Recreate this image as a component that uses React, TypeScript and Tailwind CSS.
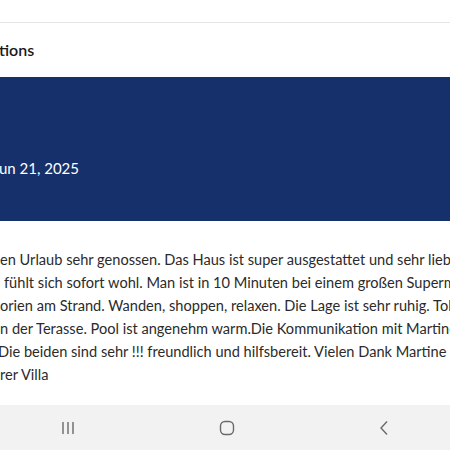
import React from "react";

const lines = [
  { text: "en Urlaub sehr genossen. Das Haus ist super ausgestattet und sehr lieb", pad: "" },
  { text: "fühlt sich sofort wohl. Man ist in 10 Minuten bei einem großen Supermarkt", pad: "pl-[4px]" },
  { text: "orien am Strand. Wanden, shoppen, relaxen. Die Lage ist sehr ruhig. Toll", pad: "" },
  { text: "n der Terasse. Pool ist angenehm warm.Die Kommunikation mit Martine", pad: "" },
  { text: "Die beiden sind sehr !!! freundlich und hilfsbereit. Vielen Dank Martine und", pad: "-ml-[2px]" },
  { text: "rer Villa", pad: "" },
];

export default function App() {
  return (
    <div className="w-[450px] h-[450px] overflow-hidden bg-white flex flex-col font-['Lato',sans-serif]">
      <div className="h-[23px] border-b border-[#e8e8e8] shrink-0" />
      <div className="h-[54px] shrink-0 flex items-center shadow-[0_1px_2px_rgba(0,0,0,0.12)]">
        <span className="-ml-[1px] text-[16px] font-semibold text-[#1a1a1a]">tions</span>
      </div>
      <div className="h-[144px] shrink-0 bg-[#16306b] flex flex-col">
        <div className="h-[80px]" />
        <span className="-ml-[1px] text-[15px] text-white leading-[22px]">un 21, 2025</span>
      </div>
      <div className="flex-1 pt-[27px] text-[14.6px] leading-[23px] text-[#2b2b2b]">
        {lines.map((l) => (
          <div key={l.text} className={"whitespace-nowrap " + l.pad}>{l.text}</div>
        ))}
      </div>
      <div className="h-[45px] shrink-0 bg-[#f2f2f2] flex items-center justify-between pl-[61px] pr-[60px]">
        <svg width="14" height="14" viewBox="0 0 14 14">
          <path d="M2 1v12M7 1v12M12 1v12" stroke="#6a6a6a" strokeWidth="1.4" />
        </svg>
        <svg width="16" height="16" viewBox="0 0 16 16">
          <rect x="1.5" y="1.5" width="13" height="13" rx="4.5" fill="none" stroke="#6a6a6a" strokeWidth="1.4" />
        </svg>
        <svg width="12" height="16" viewBox="0 0 12 16">
          <path d="M9 1.5L3 8l6 6.5" fill="none" stroke="#6a6a6a" strokeWidth="1.4" />
        </svg>
      </div>
    </div>
  );
}
